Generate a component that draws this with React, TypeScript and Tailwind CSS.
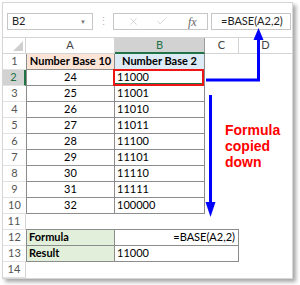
import React from 'react';
import { X, Check } from 'lucide-react';

const table: [number, string, string][] = [
  [2, '24', '11000'],
  [3, '25', '11001'],
  [4, '26', '11010'],
  [5, '27', '11011'],
  [6, '28', '11100'],
  [7, '29', '11101'],
  [8, '30', '11110'],
  [9, '31', '11111'],
  [10, '32', '100000'],
];

const RowHead = ({ n, edge = true }: { n: number; edge?: boolean }) => (
  <div
    className={`w-[23px] h-full flex items-center justify-center text-[#555] border-b border-b-[#e1e1e1] ${
      edge ? 'border-r border-r-[#d4d4d4]' : ''
    }`}
  >
    {n}
  </div>
);

export default function App() {
  return (
    <div className="relative w-[300px] h-[285px] bg-white font-['Lato',sans-serif] text-[11px] text-black">
      <div className="ml-[2px] mt-[2px] w-[291px] h-[277px] border border-[#d6d6d6] bg-white shadow-[3px_3px_4px_rgba(0,0,0,0.35)] overflow-hidden">
        {/* formula bar */}
        <div className="mt-[10px] flex h-[17px]">
          <div className="ml-[4px] w-[86px] border border-[#c6c6c6] flex items-center justify-between pl-[4px] pr-[6px]">
            <span className="text-[#222]">B2</span>
            <span className="text-[6px] text-[#777]">▼</span>
          </div>
          <div className="w-[20px] flex items-center justify-center text-[#b5b5b5]">⋮</div>
          <div className="w-[95px] border border-[#c6c6c6] flex items-center pl-[14px]">
            <X size={11} strokeWidth={1.5} className="text-[#c0c0c0]" />
            <Check size={11} strokeWidth={1.5} className="ml-[17px] text-[#c0c0c0]" />
            <span className="ml-[21px] font-['Liberation_Serif',serif] italic text-[12px] text-[#666]">fx</span>
          </div>
          <div className="ml-[3px] mr-[1px] flex-1 border border-[#c6c6c6] flex items-center pl-[9px] text-[#222]">
            =BASE(A2,2)
          </div>
        </div>

        {/* column headers */}
        <div className="mt-[7px] flex h-[17px] border-t border-[#d4d4d4] text-[#444]">
          <div className="relative w-[23px] h-full border-r border-b border-[#d4d4d4]">
            <div className="absolute right-[2px] bottom-[2px] w-0 h-0 border-l-[10px] border-l-transparent border-b-[10px] border-b-[#cfcfcf]" />
          </div>
          <div className="w-[89px] h-full flex items-center justify-center border-r border-b border-[#d4d4d4]">A</div>
          <div className="w-[90px] h-full flex items-center justify-center bg-[#d2d2d2] text-[#217346] border-r border-r-[#9c9c9c] border-b-2 border-b-[#217346]">
            B
          </div>
          <div className="w-[34px] h-full flex items-center justify-center border-r border-b border-[#d4d4d4]">C</div>
          <div className="flex-1 h-full flex items-center justify-center border-b border-[#d4d4d4]">D</div>
        </div>

        {/* row 1 */}
        <div className="flex h-[16px]">
          <RowHead n={1} edge={false} />
          <div className="w-[89px] h-full flex items-center justify-center font-bold bg-[#fce4d6] border-l border-r border-b border-[#8c8c8c]">
            Number Base 10
          </div>
          <div className="w-[90px] h-full flex items-center justify-center font-bold bg-[#ddebf7] border-r border-b border-[#8c8c8c]">
            Number Base 2
          </div>
        </div>

        {table.map(([n, a, b]) => (
          <div key={n} className="flex h-[16px]">
            {n === 2 ? (
              <div className="w-[23px] h-full flex items-center justify-center bg-[#d2d2d2] text-[#217346] border-r-2 border-r-[#217346] border-b border-b-[#e1e1e1]">
                2
              </div>
            ) : (
              <RowHead n={n} edge={false} />
            )}
            <div className="w-[89px] h-full flex items-center justify-center border-l border-r border-b border-[#8c8c8c]">{a}</div>
            <div className="relative w-[90px] h-full flex items-center pl-[2px] border-r border-b border-[#8c8c8c]">
              {b}
              {n === 2 && (
                <>
                  <div className="absolute left-0 right-[1px] bottom-[1px] h-[1px] bg-[#217346]" />
                  <div className="absolute -left-[2px] -top-[1px] right-0 -bottom-[1px] border-2 border-[#ee1515]" />
                </>
              )}
            </div>
          </div>
        ))}

        {/* row 11 */}
        <div className="flex h-[16px]">
          <RowHead n={11} />
          <div className="w-[89px] h-full border-b border-[#8c8c8c]" />
          <div className="w-[90px] h-full border-b border-[#8c8c8c]" />
          <div className="w-[34px] h-full border-b border-[#8c8c8c]" />
        </div>

        {/* rows 12-13 */}
        <div className="flex h-[16px]">
          <RowHead n={12} edge={false} />
          <div className="w-[89px] h-full flex items-center pl-[2px] font-bold bg-[#e2efda] border-l border-r border-b border-[#8c8c8c]">
            Formula
          </div>
          <div className="w-[124px] h-full flex items-center justify-end pr-[3px] border-r border-b border-[#8c8c8c]">
            =BASE(A2,2)
          </div>
        </div>
        <div className="flex h-[16px]">
          <RowHead n={13} edge={false} />
          <div className="w-[89px] h-full flex items-center pl-[2px] font-bold bg-[#e2efda] border-l border-r border-b border-[#8c8c8c]">
            Result
          </div>
          <div className="w-[124px] h-full flex items-center pl-[2px] border-r border-b border-[#8c8c8c]">11000</div>
        </div>
        <div className="flex h-[16px]">
          <RowHead n={14} />
        </div>
      </div>

      {/* annotations */}
      <div className="absolute left-[225px] top-[120px] font-['Liberation_Sans',Arial,sans-serif] font-bold text-[14px] leading-[16px] text-[#ff0000]">
        Formula
        <br />
        copied
        <br />
        down
      </div>
      <svg className="absolute left-0 top-0 pointer-events-none" width="300" height="285" viewBox="0 0 300 285">
        <polyline points="206,78 258.5,78 258.5,36" fill="none" stroke="#0000ff" strokeWidth="3" />
        <polygon points="258.5,26 253.5,38 263.5,38" fill="#0000ff" />
        <line x1="210.5" y1="93" x2="210.5" y2="201" stroke="#0000ff" strokeWidth="3" />
        <polygon points="205.5,200 215.5,200 210.5,215" fill="#0000ff" />
      </svg>
    </div>
  );
}
